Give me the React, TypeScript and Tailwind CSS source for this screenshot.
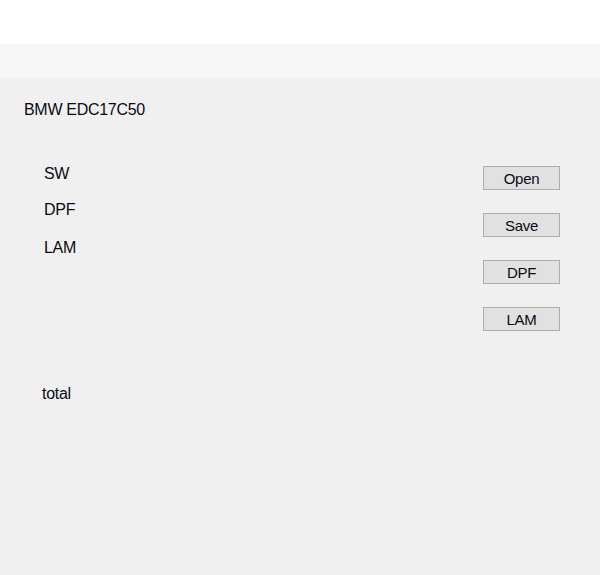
import React from 'react';

const buttons = ['Open', 'Save', 'DPF', 'LAM'];

export default function App() {
  return (
    <div className="w-[600px] h-[575px] flex flex-col bg-white font-['Liberation_Sans',Arial,sans-serif] text-[#0a0a14]">
      {/* top white strip + dithered band */}
      <div className="h-[44px] bg-white" />
      <div className="h-[34px] bg-[#f6f6f6]" />

      {/* form body */}
      <div className="flex-1 bg-[#f0f0f0] pt-[23px] px-[24px]">
        <div className="text-[16px] leading-[18px] tracking-[-0.3px]">BMW EDC17C50</div>

        <div className="flex mt-[46px]">
          <div className="ml-[20px] flex flex-col text-[16px] leading-[18px] tracking-[-0.3px]">
            <span>SW</span>
            <span className="mt-[18px]">DPF</span>
            <span className="mt-[20px]">LAM</span>
          </div>

          <div className="ml-auto mr-[16px] mt-[1px] flex flex-col gap-[23px]">
            {buttons.map((b) => (
              <button
                key={b}
                className="w-[77px] h-[24px] bg-[#e1e1e1] border border-[#adadad] text-[15px] leading-[18px] tracking-[-0.3px] text-[#0a0a14] flex items-center justify-center pt-[1px]"
              >
                {b}
              </button>
            ))}
          </div>
        </div>

        <div className="mt-[54px] ml-[18px] text-[16px] leading-[18px] tracking-[-0.3px]">total</div>
      </div>
    </div>
  );
}
